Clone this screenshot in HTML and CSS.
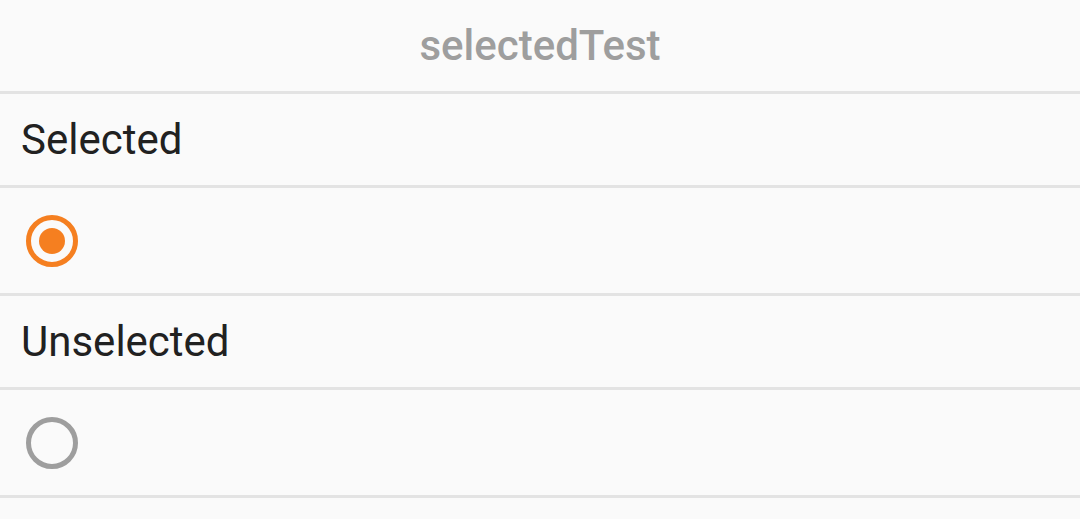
FILE: index.html
```html
<!DOCTYPE html>
<html>
<head>
<meta charset="utf-8">
<link rel="stylesheet" href="styles.css">
</head>
<body>
<div class="screen">
  <header class="title-bar"><span class="title">selectedTest</span></header>
  <div class="row text-row"><span class="label">Selected</span></div>
  <div class="row radio-row">
    <svg class="radio" width="56" height="56" viewBox="0 0 56 56">
      <circle cx="28" cy="28" r="23.5" fill="none" stroke="#f57f20" stroke-width="5"/>
      <circle cx="28" cy="28" r="13" fill="#f57f20"/>
    </svg>
  </div>
  <div class="row text-row"><span class="label">Unselected</span></div>
  <div class="row radio-row">
    <svg class="radio" width="56" height="56" viewBox="0 0 56 56">
      <circle cx="28" cy="28" r="23.5" fill="none" stroke="#9e9e9e" stroke-width="5"/>
    </svg>
  </div>
</div>
</body>
</html>
```
FILE: styles.css
```css
html, body {
  margin: 0;
  padding: 0;
  background: #fafafa;
}
body {
  width: 1080px;
  height: 519px;
  overflow: hidden;
  font-family: Roboto, "Noto Sans", sans-serif;
}
.screen {
  display: flex;
  flex-direction: column;
}
.title-bar {
  height: 91px;
  display: flex;
  align-items: center;
  justify-content: center;
  border-bottom: 3px solid #e3e3e3;
}
.title {
  font-size: 42px;
  font-weight: 500;
  color: #9e9e9e;
}
.row {
  display: flex;
  align-items: center;
  border-bottom: 3px solid #e3e3e3;
}
.text-row {
  height: 91px;
  padding-left: 21px;
}
.label {
  font-size: 42px;
  color: #212121;
}
.radio-row {
  height: 105px;
  padding-left: 24px;
}
.radio {
  display: block;
}
```
